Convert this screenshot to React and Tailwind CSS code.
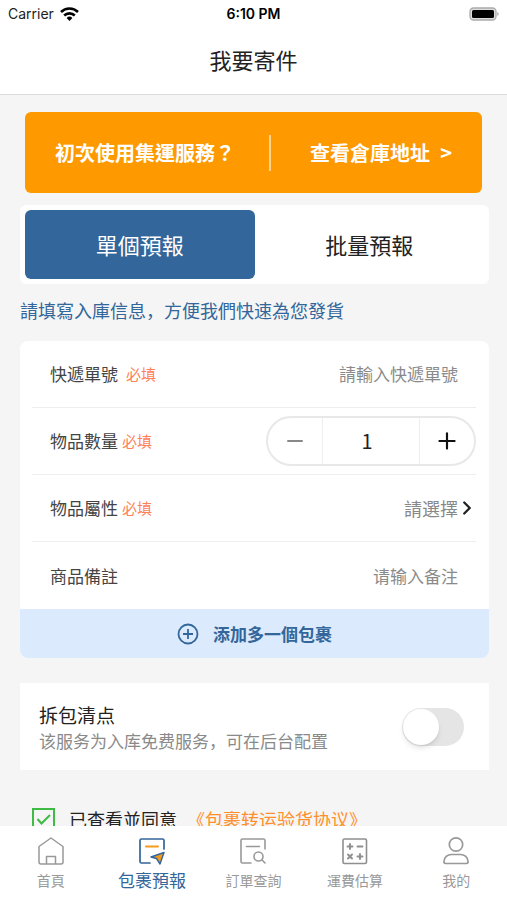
import React, { useState } from "react";
import { ChevronRight, Minus, Plus } from "lucide-react";

const HomeIcon = () => (
  <svg width="28" height="30" viewBox="0 0 28 30" fill="none" stroke="#999" strokeWidth="1.5" strokeLinejoin="round">
    <path d="M2 10.5 14 2l12 8.500V26a2 2 0 0 1-2 2H4a2 2 0 0 1-2-2z" />
    <path d="M9.500 28v-7.500h9V28" />
  </svg>
);

const ParcelIcon = () => (
  <svg width="28" height="30" viewBox="0 0 28 30" fill="none" strokeLinecap="round" strokeLinejoin="round">
    <path d="M26 13V4.500A1.500 1.500 0 0 0 24.500 3H3.500A1.500 1.500 0 0 0 2 4.500v21A1.500 1.500 0 0 0 3.500 27H12" stroke="#33669a" strokeWidth="1.700" />
    <path d="M8 10.500h12" stroke="#f59a1b" strokeWidth="2" />
    <path d="M26 16.500 13 21l5.500 1.500L22 28z" fill="#f59a1b" stroke="#33669a" strokeWidth="1.400" />
  </svg>
);

const OrderIcon = () => (
  <svg width="28" height="30" viewBox="0 0 28 30" fill="none" stroke="#999" strokeWidth="1.600" strokeLinecap="round" strokeLinejoin="round">
    <path d="M26 13V4.500A1.500 1.500 0 0 0 24.500 3H3.500A1.500 1.500 0 0 0 2 4.500v21A1.500 1.500 0 0 0 3.500 27H12" />
    <path d="M7.500 10.500h13" />
    <circle cx="19.500" cy="20.500" r="4.500" />
    <path d="m23 24 3 3" />
  </svg>
);

const CalcIcon = () => (
  <svg width="28" height="30" viewBox="0 0 28 30" fill="none" stroke="#8f8f8f" strokeWidth="1.600" strokeLinecap="round">
    <rect x="2" y="3" width="23.500" height="24.500" rx="1.500" />
    <path strokeWidth="1.900" d="M9 8v5M6.500 10.500h5M16.500 10.500h5M7 18.500l4 4M11 18.500l-4 4M16.500 20.500h5M19 18v5" />
  </svg>
);

const UserIcon = () => (
  <svg width="28" height="30" viewBox="0 0 28 30" fill="none" stroke="#999" strokeWidth="1.700" strokeLinejoin="round">
    <circle cx="14" cy="8.500" r="6.700" />
    <path d="M2 25.500C2 21 5.500 18.500 9.500 18.500h9c4 0 7.500 2.500 7.500 7A1.800 1.800 0 0 1 24.500 27.500h-21A1.800 1.800 0 0 1 2 25.500z" />
  </svg>
);

const navItems = [
  { label: "首頁", icon: HomeIcon },
  { label: "包裹預報", icon: ParcelIcon, active: true },
  { label: "訂單查詢", icon: OrderIcon },
  { label: "運費估算", icon: CalcIcon },
  { label: "我的", icon: UserIcon },
];

const StatusBar = () => (
  <div className="grid grid-cols-3 items-center h-7 pl-2 pr-2 text-sm text-[#222] font-['Inter','Noto_Sans_CJK_SC',sans-serif]">
    <div className="flex items-center gap-1.5">
      <span>Carrier</span>
      <svg width="19" height="15" viewBox="0 0 19 15" fill="none" stroke="#000" strokeWidth="2.600">
        <path d="M1 5a12.200 12.200 0 0 1 17 0" />
        <path d="M4.200 8.500a7.600 7.600 0 0 1 10.600 0" />
        <path d="m9.500 14-2.900-3a4.200 4.200 0 0 1 5.800 0z" fill="#000" stroke="none" />
      </svg>
    </div>
    <span className="text-center font-semibold text-black">6:10 PM</span>
    <svg className="justify-self-end" width="30" height="15" viewBox="0 0 30 15">
      <rect x="1" y="1" width="26" height="12" rx="3.500" fill="#ddd" stroke="#aaa" strokeWidth="1.300" />
      <rect x="3" y="3" width="22" height="8" rx="1.500" fill="#000" />
      <path d="M28.300 5q1.400.5 1.400 2t-1.400 2z" fill="#aaa" />
    </svg>
  </div>
);

const FormRow = ({ id, label, required, gap = "gap-1", last, children }) => (
  <div className={`flex items-center justify-between h-[67px] ml-3 mr-[13px] pl-[18px] ${last ? "" : "border-b border-[#eee]"}`}>
    <label htmlFor={id} className={`flex items-center shrink-0 ${gap} text-[17px] text-[#444]`}>
      {label}
      {required && <span className="text-[15px] text-[#ff8158]">必填</span>}
    </label>
    {children}
  </div>
);

const App = () => {
  const [count, setCount] = useState(1);
  const [inspect, setInspect] = useState(false);
  const [agreed, setAgreed] = useState(true);

  return (
    <div className="h-screen flex flex-col bg-[#f5f5f5] text-[#222] font-['Noto_Sans_CJK_SC',sans-serif]">
      <header className="shrink-0 bg-white border-b border-[#dcdcdc]">
        <StatusBar />
        <h1 className="h-[66px] pb-1 flex items-center justify-center text-[22px]">我要寄件</h1>
      </header>

      <main className="flex-1 min-h-0 overflow-hidden pl-5 pr-[18px] pt-[17px]">
        <div className="flex items-center h-[81px] ml-[5px] mr-[7px] rounded-md bg-[#ff9900] text-white text-[20px] font-bold">
          <span lang="zh-TW" className="flex-1 pl-[30px] whitespace-nowrap font-['Noto_Sans_CJK_TC',sans-serif]">
            初次使用集運服務？
          </span>
          <span className="w-0.5 h-9 bg-[#ffd38f]"></span>
          <a href="#warehouse" className="flex items-center justify-between w-[211px] pl-[39px] pr-[30px] whitespace-nowrap">
            <span>查看倉庫地址</span>
            <span>&gt;</span>
          </a>
        </div>

        <div className="flex mt-3 p-[5px] rounded-md bg-white text-[22px]">
          <button className="flex-1 h-[69px] rounded-md bg-[#33669a] text-white">單個預報</button>
          <button className="flex-1 h-[69px] rounded-md">批量預報</button>
        </div>

        <p className="mt-3 text-[18px] leading-7 text-[#33669a]">請填寫入庫信息，方便我們快速為您發貨</p>

        <section className="mt-[17px] rounded-lg bg-white overflow-hidden">
          <FormRow id="tracking" label="快遞單號" required gap="gap-2">
            <input
              id="tracking"
              type="text"
              placeholder="請輸入快遞單號"
              className="flex-1 min-w-0 pr-[18px] text-right text-[17px] placeholder:text-[#8a8a8a] outline-none"
            />
          </FormRow>
          <FormRow id="quantity" label="物品數量" required>
            <div className="flex w-[210px] h-[50px] rounded-full border-2 border-[#e8e8e8] overflow-hidden">
              <button
                aria-label="減少"
                className="w-[54px] flex items-center justify-center text-[#888]"
                onClick={() => setCount(Math.max(1, count - 1))}
              >
                <Minus size={24} />
              </button>
              <input
                id="quantity"
                type="text"
                value={count}
                onChange={(e) => setCount(Number(e.target.value) || 1)}
                className="flex-1 min-w-0 border-x border-[#eee] pr-2 text-center text-[20px] outline-none"
              />
              <button
                aria-label="增加"
                className="w-[54px] flex items-center justify-center text-[#111]"
                onClick={() => setCount(count + 1)}
              >
                <Plus size={26} />
              </button>
            </div>
          </FormRow>
          <FormRow id="attribute" label="物品屬性" required>
            <div className="flex items-center">
              <select id="attribute" className="appearance-none text-[18px] text-[#888] outline-none">
                <option>請選擇</option>
              </select>
              <ChevronRight size={22} strokeWidth={2.5} className="-mx-0.5" />
            </div>
          </FormRow>
          <FormRow id="remark" label="商品備註" last>
            <input
              id="remark"
              type="text"
              placeholder="请输入备注"
              className="flex-1 min-w-0 pr-[18px] text-right text-[17px] placeholder:text-[#8a8a8a] outline-none"
            />
          </FormRow>
          <button className="flex items-center justify-center gap-3.5 w-full h-[49px] bg-[#dbeafd] text-[17px] font-bold text-[#33669a]">
            <svg width="22" height="22" viewBox="0 0 22 22" fill="none" stroke="currentColor" strokeWidth="1.800">
              <circle cx="11" cy="11" r="9.500" />
              <path d="M11 6v10M6 11h10" />
            </svg>
            添加多一個包裹
          </button>
        </section>

        <section className="flex items-center justify-between mt-[25px] h-[87px] pl-[19px] pr-[25px] bg-white">
          <label htmlFor="inspect">
            <span className="block text-[19px] leading-7">拆包清点</span>
            <span className="block text-[17px] leading-6 text-[#8a8a8a]">该服务为入库免费服务，可在后台配置</span>
          </label>
          <input
            id="inspect"
            type="checkbox"
            role="switch"
            checked={inspect}
            onChange={(e) => setInspect(e.target.checked)}
            className="appearance-none shrink-0 w-[62px] h-[38px] p-px rounded-full bg-[#e5e5e5] checked:bg-[#33669a] before:block before:size-9 before:rounded-full before:bg-white before:shadow-md checked:before:translate-x-6"
          />
        </section>

        <div className="flex items-center mt-[35px] ml-3 text-[18px] leading-7">
          <label className="flex items-center gap-3.5">
            <span className="grid size-[23px]">
              <input
                type="checkbox"
                checked={agreed}
                onChange={(e) => setAgreed(e.target.checked)}
                className="peer appearance-none col-start-1 row-start-1 border-2 border-[#3dbb45]"
              />
              <svg
                className="pointer-events-none invisible peer-checked:visible col-start-1 row-start-1"
                viewBox="0 0 23 23"
                fill="none"
                stroke="#3dbb45"
                strokeWidth="2"
              >
                <path d="m5.500 11 4 4.500L18 7" />
              </svg>
            </span>
            已查看並同意
          </label>
          <a href="#agreement" className="ml-2.5 text-[#ff8f2b]">《包裹转运验货协议》</a>
        </div>
      </main>

      <nav className="shrink-0 grid grid-cols-5 h-[74px] pt-2.5 bg-white">
        {navItems.map(({ label, icon: Icon, active }) => (
          <a
            key={label}
            href="#nav"
            className={`flex flex-col items-center gap-0.5 whitespace-nowrap leading-6 ${
              active ? "text-[17px] text-[#33669a]" : "text-[14px] text-[#999]"
            }`}
          >
            <Icon />
            <span>{label}</span>
          </a>
        ))}
      </nav>
    </div>
  );
};

export default App;
